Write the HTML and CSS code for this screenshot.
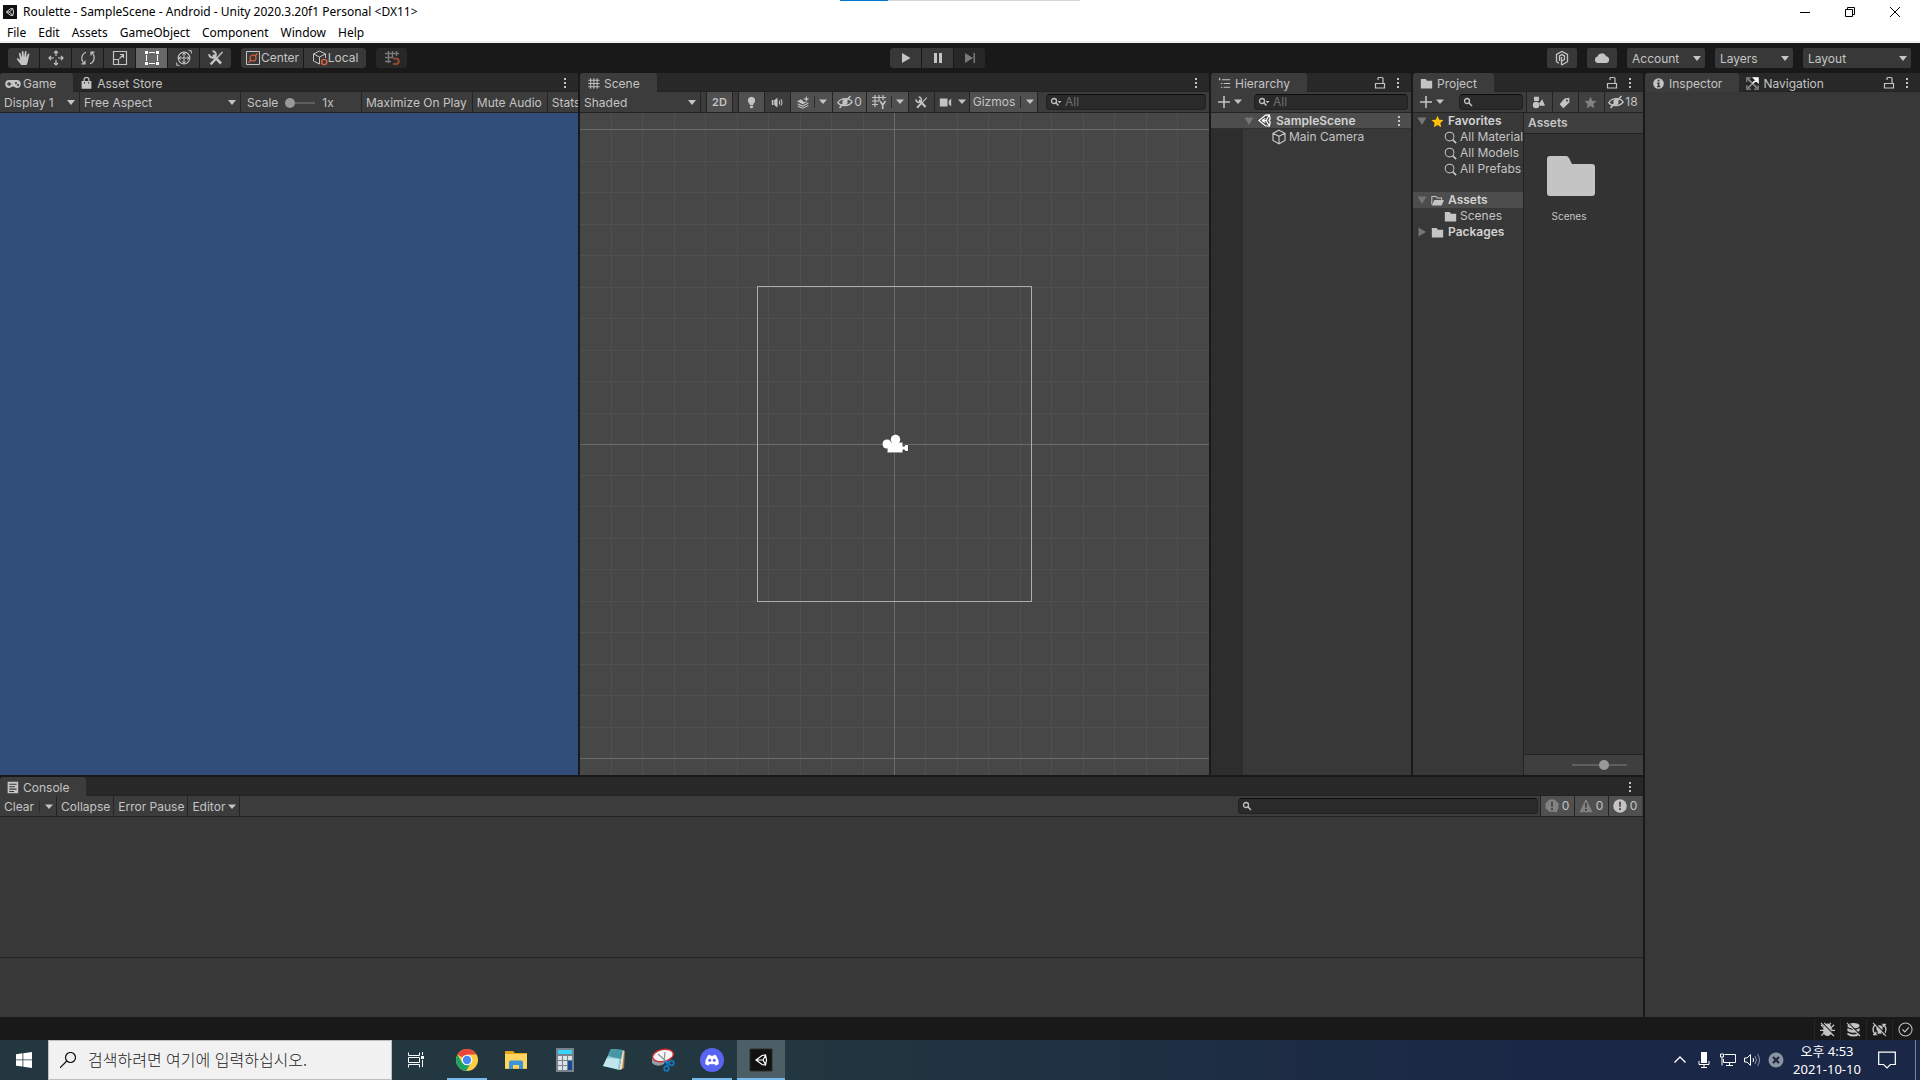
FILE: index.html
```html
<!DOCTYPE html>
<html lang="ko">
<head>
    <meta charset="UTF-8">
    <meta name="viewport" content="width=device-width, initial-scale=1.0">
    <title>Roulette - SampleScene - Android - Unity 2020.3.20f1 Personal</title>
    <link rel="stylesheet" href="styles.css">
</head>
<body>
    <!-- icon sprite -->
    <svg class="sprite" width="0" height="0" aria-hidden="true">
        <symbol id="i-unity" viewBox="0 0 16 16"><path d="M9 1.500 14 1l1 5-1.500 2L15 10l-1 5-5-.5L1.200 8zM5 8h5l3.200-5.500M10 8l3.200 5.500M5 8l4-2.500M5 8l4 2.500" fill="none" stroke="currentColor" stroke-width="1.500"/></symbol>
        <symbol id="i-hand" viewBox="0 0 16 16"><path d="M5.200 15 1 9.500c-.5-1 .6-1.700 1.400-1L4.200 10 2.900 3.800c-.2-1.200 1.300-1.500 1.600-.4L5.900 7.500 5.800 1.800c0-1.200 1.600-1.200 1.700 0L8 7.200 8.900 1.800c.2-1.100 1.700-1 1.600.2L10.200 7.800 11.800 4c.5-1 1.800-.5 1.500.6L12 10.500c-.3 2-.8 3.500-1.500 4.500z" fill="currentColor"/></symbol>
        <symbol id="i-move" viewBox="0 0 16 16"><path d="M8 1v5M8 10v5M1 8h5M10 8h5M6 3l2-2 2 2M6 13l2 2 2-2M3 6 1 8l2 2M13 6l2 2-2 2" fill="none" stroke="currentColor" stroke-width="1.200"/></symbol>
        <symbol id="i-rotate" viewBox="0 0 16 16"><path d="M6 2.200A6.500 6.500 0 0 0 4.500 13.500M1.500 13.800h3.500V10.500M10 13.800A6.500 6.500 0 0 0 11.500 2.500M14.500 2.200H11V5.500" fill="none" stroke="currentColor" stroke-width="1.200"/></symbol>
        <symbol id="i-scale" viewBox="0 0 16 16"><path d="M1.500 1.500h13v13h-13zM1.500 9.500h5v5M7.500 8.500l4-4M8 4.500h3.500V8" fill="none" stroke="currentColor" stroke-width="1.200"/></symbol>
        <symbol id="i-rect" viewBox="0 0 16 16"><path d="M5 2.500h6M5 13.500h6M2.500 5v6M13.500 5v6" stroke="currentColor"/><path d="M1 1h3v3H1zM12 1h3v3h-3zM1 12h3v3H1zM12 12h3v3h-3z" fill="currentColor"/></symbol>
        <symbol id="i-transform" viewBox="0 0 16 16"><circle cx="8" cy="8" r="5.800" fill="none" stroke="currentColor" stroke-width="1.200"/><path d="M8 3v10M3 8h10M6.300 4.700 8 3l1.700 1.700M6.300 11.300 8 13l1.700-1.700M4.700 6.300 3 8l1.700 1.700M11.300 6.300 13 8l-1.700 1.700M12.500.7h2.800v2.800M3.500 15.300H.7v-2.800" fill="none" stroke="currentColor"/></symbol>
        <symbol id="i-tools" viewBox="0 0 16 16"><path d="M3 14.500 14.500 2" stroke="currentColor" stroke-width="1.400"/><path d="M1.800 13.500 7 8l1.600 1.500-5.300 5.600z" fill="currentColor"/><path d="M5 5l8 8.500" stroke="currentColor" stroke-width="2.600"/><path d="M4.500 1.200a3.300 3.300 0 1 1-3.200 3" fill="none" stroke="currentColor" stroke-width="2"/></symbol>
        <symbol id="i-center" viewBox="0 0 16 16"><path d="M1.500 1.500h13v13h-13z" fill="none" stroke="currentColor"/><g fill="none" stroke="#e0643c" stroke-width="1.200"><circle cx="8" cy="8" r="3"/><path d="M3.500 12.500 6 10M10 6l2.500-2.500"/></g></symbol>
        <symbol id="i-cube" viewBox="0 0 16 16"><path d="M8 1.200 14 4.300v7.200L8 14.800 2 11.500V4.300zM2 4.300 8 7.400l6-3.100M8 7.400v7.400" fill="none" stroke="currentColor" stroke-width="1.200"/></symbol>
        <symbol id="i-local" viewBox="0 0 16 16"><path d="M7.500 14 1.500 11V4l6-3 6 3v4M1.500 4l6 3 6-3M7.500 7v7" fill="none" stroke="currentColor"/><circle cx="12.200" cy="12" r="2.600" fill="#383838" stroke="#e0643c" stroke-width="1.400"/></symbol>
        <symbol id="i-snap" viewBox="0 0 16 16"><path d="M4.500 1v12M8.500 1v7M12.500 1v5M1 3.500h14M1 7.500h8M1 11.500h6" stroke="#7a7a7a" stroke-width="1.300"/><path d="M9 8.500h3a2.700 2.700 0 0 1 0 5.500H9" fill="none" stroke="#94472f" stroke-width="2"/></symbol>
        <symbol id="i-play" viewBox="0 0 16 16"><path d="M4 3v10l8.500-5z" fill="currentColor"/></symbol>
        <symbol id="i-pause" viewBox="0 0 16 16"><path d="M4 3h3v10H4zM9 3h3v10H9z" fill="currentColor"/></symbol>
        <symbol id="i-step" viewBox="0 0 16 16"><path d="M3 3v10l8-5zM11.500 3H13v10h-1.500z" fill="currentColor"/></symbol>
        <symbol id="i-collab" viewBox="0 0 16 16"><path d="M5 13.300 2.500 11.700V4.500L8 1.400l5.500 3.100v7.200L8 14.800 7.500 14.500V7M5.500 11V6L8 4.600 10.500 6v3.500L8 11" fill="none" stroke="currentColor" stroke-width="1.300"/></symbol>
        <symbol id="i-cloud" viewBox="0 0 16 16"><path d="M4 13a3.300 3.300 0 0 1-.5-6.500A4.500 4.500 0 0 1 12 6.300 3.400 3.400 0 0 1 12.500 13z" fill="currentColor"/></symbol>
        <symbol id="i-game" viewBox="0 0 16 16"><path fill-rule="evenodd" d="M4.500 4h7a4 4 0 0 1 .5 8c-2 0-2-1.500-4-1.500S6 12 4 12a4 4 0 0 1 .5-8zM3.500 6v1.300H2.200v1.400h1.300V10h1.300V8.700h1.300V7.300H4.800V6zM11 6a1 1 0 1 0 .01 0zM13 8a1 1 0 1 0 .01 0z" fill="currentColor"/></symbol>
        <symbol id="i-bag" viewBox="0 0 16 16"><path d="M2 5h12v9.500H2z" fill="currentColor"/><path d="M5 6V3.500a3 3 0 0 1 6 0V6" fill="none" stroke="currentColor" stroke-width="1.500"/><path d="M5.500 6v2M10.500 6v2" stroke="#383838" stroke-width="1.400"/></symbol>
        <symbol id="i-hash" viewBox="0 0 16 16"><path d="M4.500 1.500v13M8.500 1.500v13M12.500 1.500v13M1.500 4h14M1.500 8h14M1.500 12h14" stroke="currentColor" stroke-width="1.200"/></symbol>
        <symbol id="i-gridy" viewBox="0 0 16 16"><path d="M4 1v12M8 1v6M12 1v5M1 3.500h14M1 7h7M1 10.500h6" stroke="currentColor" stroke-width="1.200"/><path d="M9 7l2.700 4L14.500 7M11.700 11v4" fill="none" stroke="currentColor" stroke-width="1.600"/></symbol>
        <symbol id="i-list" viewBox="0 0 16 16"><path d="M5 3.500h10M7 8h8M7 12.500h8M1 3.500h2M3.500 8h2M3.500 12.500h2M2 1v3" stroke="currentColor" stroke-width="1.300"/></symbol>
        <symbol id="i-folder" viewBox="0 0 16 16"><path d="M1 2.500h6l1.500 2H15v9.500H1z" fill="currentColor"/></symbol>
        <symbol id="i-open" viewBox="0 0 16 16"><path d="M1 13V3h5l1.500 2H13v2" fill="none" stroke="currentColor" stroke-width="1.300"/><path d="M4 7.500h12L13 14H1z" fill="currentColor"/></symbol>
        <symbol id="i-bigfolder" viewBox="0 0 48 40"><path d="M3 0h16q2 0 3 2l3 6h20q3 0 3 3v26q0 3-3 3H3q-3 0-3-3V3q0-3 3-3z" fill="currentColor"/></symbol>
        <symbol id="i-info" viewBox="0 0 16 16"><circle cx="8" cy="8" r="6.500" fill="currentColor"/><path d="M7 3.500h2.200v2H7zM6.200 6.700h3v4.300h1v1.500h-4V11h1V8.200h-1z" fill="#383838"/></symbol>
        <symbol id="i-nav" viewBox="0 0 16 16"><path d="M2 2l12 12M2 14 14 2" stroke="#8a8a8a" stroke-width="2"/><path d="M1 6V1h5M15 10v5h-5M1 10v5h5" fill="none" stroke="#8a8a8a" stroke-width="1.600"/><path d="M9 1h6v6zM8 8l5-5" fill="#fff" stroke="#fff" stroke-width="1.400"/></symbol>
        <symbol id="i-console" viewBox="0 0 16 16"><path d="M2 1h13v14H2z" fill="currentColor"/><path d="M4 4h9M4 7h7M4 10h9M4 13h6" stroke="#383838" stroke-width="1.300"/></symbol>
        <symbol id="i-lock" viewBox="0 0 12 14"><path d="M2 7.500h8.500v4.500h-9V7.500zM4 4V2.500Q4 1.500 5 1.500h3Q9 1.500 9 2.500v5" fill="none" stroke="currentColor" stroke-width="1.200"/></symbol>
        <symbol id="i-more" viewBox="0 0 4 14"><path d="M1 2h2v2H1zM1 6h2v2H1zM1 10h2v2H1z" fill="currentColor"/></symbol>
        <symbol id="i-down" viewBox="0 0 8 6"><path d="M0 .5h8l-4 4.500z" fill="currentColor"/></symbol>
        <symbol id="i-fold" viewBox="0 0 10 10"><path d="M.5 1.500h9L5 9z" fill="currentColor"/></symbol>
        <symbol id="i-bulb" viewBox="0 0 16 16"><path d="M8 1a4.500 4.500 0 0 1 4.200 6c-.6 1.700-2 2.200-2.200 4H6c-.2-1.800-1.600-2.300-2.200-4A4.500 4.500 0 0 1 8 1zM6 12h4v1.500L9 15H7l-1-1.500z" fill="currentColor"/></symbol>
        <symbol id="i-audio" viewBox="0 0 16 16"><path d="M1 5h2v6H1zM4 5l4-3v12l-4-3z" fill="currentColor"/><path d="M10 5.500q1.500 2.500 0 5M12 4q3 4 0 8" fill="none" stroke="currentColor" stroke-width="1.300"/></symbol>
        <symbol id="i-fx" viewBox="0 0 16 16"><path d="M0 6.500 5 4l3.500 3.500 4.500-.5L7 10zM1 9l6 2.600L14 8v1.600L7 13.200 1 10.500zM1 11.800l6 2.600 7-3.400v1.400L7 15.800l-6-2.600z" fill="currentColor"/><path d="M11.500 0l1 2.800 3 .9-3 1-1 2.800-1-2.800-3-1 3-.9z" fill="currentColor"/></symbol>
        <symbol id="i-eye" viewBox="0 0 16 16"><path d="M.8 8.500C4 3.700 12 3.200 15.200 8 12 12.500 4 12.800.8 8.500z" fill="none" stroke="currentColor" stroke-width="1.300"/><ellipse cx="8" cy="8" rx="2.600" ry="3" fill="currentColor"/><path d="M2.500 14 13.500 2" stroke="currentColor" stroke-width="1.500"/></symbol>
        <symbol id="i-video" viewBox="0 0 16 16"><path d="M1 3h9.500v10H1zM12 6l3-3v10l-3-3z" fill="currentColor"/></symbol>
        <symbol id="i-search" viewBox="0 0 10 10"><circle cx="4" cy="4" r="2.500" fill="none" stroke="currentColor" stroke-width="1.300"/><path d="M5.800 5.800 9 9" stroke="currentColor" stroke-width="1.500"/></symbol>
        <symbol id="i-searchdown" viewBox="0 0 13 10"><circle cx="4" cy="4" r="2.500" fill="none" stroke="currentColor" stroke-width="1.300"/><path d="M5.800 5.800 8.500 8.500" stroke="currentColor" stroke-width="1.500"/><path d="M7.500 4h4l-2 2.200z" fill="currentColor"/></symbol>
        <symbol id="i-find" viewBox="0 0 14 14"><circle cx="6" cy="6" r="4.700" fill="none" stroke="currentColor" stroke-width="1.100"/><path d="M9.500 9.500 13 13" stroke="currentColor" stroke-width="1.800"/></symbol>
        <symbol id="i-plus" viewBox="0 0 12 12"><path d="M6 0v12M0 6h12" stroke="currentColor" stroke-width="1.600"/></symbol>
        <symbol id="i-star" viewBox="0 0 14 14"><path d="M7 .8 8.900 5l4.600.5-3.400 3.100.9 4.600-4-2.300-4 2.300.9-4.600L.5 5.500 5.100 5z" fill="currentColor"/></symbol>
        <symbol id="i-shapes" viewBox="0 0 16 16"><path d="M2.500 1h6v5h-6z" fill="currentColor"/><circle cx="5" cy="11" r="4" fill="currentColor"/><path d="M12.500 4 16 12h-6.500L9 9z" fill="currentColor"/></symbol>
        <symbol id="i-tag" viewBox="0 0 16 16"><path fill-rule="evenodd" d="M8 3l6-1v6L6.500 15 2 10zM11 4.200a1.300 1.300 0 1 0 .01 0z" fill="currentColor"/></symbol>
        <symbol id="i-err" viewBox="0 0 16 16"><path d="M5 .5h6L15.500 5v5.500l-1.500 2v2.500l-4-.3H5L.5 10.500V5z" fill="currentColor"/><path d="M7 3h2l-.3 6H7.300zM7 10.500h2v2H7z" fill="#3a3a3a"/></symbol>
        <symbol id="i-warn" viewBox="0 0 16 16"><path d="M7.300 1h1.400L15.500 15H.5z" fill="currentColor"/><path d="M7 4.500h2l-.3 5.500H7.300zM7 11.500h2v2H7z" fill="#3a3a3a"/></symbol>
        <symbol id="i-note" viewBox="0 0 16 16"><circle cx="8" cy="8" r="7.700" fill="currentColor"/><path d="M7 3h2l-.3 6H7.300zM7 10.500h2v2H7z" fill="#3a3a3a"/></symbol>
        <symbol id="i-bug" viewBox="0 0 16 16"><path d="M4.500 5a3.500 3.500 0 0 1 7 0l1 1v5q-1 4-4.500 4t-4.500-4V6z" fill="currentColor"/><path d="M1 3l3 3M15 3l-3 3M0 9h16M1.500 14.500 5 11M14.500 14.500 11 11M4.500 1l1.500 2M11.500 1 10 3" stroke="currentColor" stroke-width="1.400"/><path d="M2.500 1 16 14.500" stroke="#191919" stroke-width="1.300"/><path d="M1 1l14 14" stroke="currentColor" stroke-width="1.200"/></symbol>
        <symbol id="i-stack" viewBox="0 0 16 16"><ellipse cx="8" cy="4" rx="6.500" ry="3" fill="currentColor"/><path d="M1.500 6.500q6.500 4 13 0v3q-6.500 4-13 0zM1.500 11.500q6.500 3.500 13 0v2q-6.500 4-13 0z" fill="currentColor"/><path d="M2.500 1 16 14.500" stroke="#191919" stroke-width="1.300"/><path d="M1 1l14 14" stroke="currentColor" stroke-width="1.200"/></symbol>
        <symbol id="i-bake" viewBox="0 0 16 16"><path d="M4 2.500A6.700 6.700 0 0 0 4 13.500H1M12 13.500A6.700 6.700 0 0 0 12 2.500h3M4 13.500V10.500M12 2.500v3" fill="none" stroke="currentColor" stroke-width="1.400"/><path d="M8 3.500a3.300 3.300 0 0 1 2 6v3H6v-3a3.300 3.300 0 0 1 2-6z" fill="currentColor"/><path d="M2.500 1 16 14.500" stroke="#191919" stroke-width="1.300"/><path d="M1 1l14 14" stroke="currentColor" stroke-width="1.200"/></symbol>
        <symbol id="i-check" viewBox="0 0 16 16"><circle cx="8" cy="8" r="7" fill="none" stroke="currentColor" stroke-width="1.100"/><path d="M4.800 8l2.500 2.500L11.500 5.800" fill="none" stroke="currentColor" stroke-width="1.300"/></symbol>
    </svg>

    <header class="titlebar">
        <div class="share-strip"></div>
        <svg class="app-icon" viewBox="0 0 14 14"><path d="M0 0h14v14H0z" fill="#111"/><path d="M7.500 3.700 9.800 3.500 10.500 7l-.7 3.500-2.300-.2L3.300 7zM3.500 7h3l3-3M6.500 7l3 3.300" fill="none" stroke="#ddd"/></svg>
        <h1>Roulette - SampleScene - Android - Unity 2020.3.20f1 Personal &lt;DX11&gt;</h1>
        <div class="window-buttons">
            <button type="button" aria-label="Minimize"><svg viewBox="0 0 10 10"><path d="M0 5.500h10" stroke="#000"/></svg></button>
            <button type="button" aria-label="Restore"><svg viewBox="0 0 10 10"><path d="M.5 2.500h7v7h-7zM2.500 2.500v-2h7v7h-2" fill="none" stroke="#000"/></svg></button>
            <button type="button" aria-label="Close"><svg viewBox="0 0 10 10"><path d="M0 0l10 10M10 0 0 10" stroke="#000"/></svg></button>
        </div>
    </header>

    <nav class="menubar">
        <button type="button">File</button>
        <button type="button">Edit</button>
        <button type="button">Assets</button>
        <button type="button">GameObject</button>
        <button type="button">Component</button>
        <button type="button">Window</button>
        <button type="button">Help</button>
    </nav>

    <div class="main-toolbar">
        <div class="toolbar-left">
            <div class="btn-group">
                <button type="button" aria-label="Hand"><svg class="icon"><use href="#i-hand"/></svg></button>
                <button type="button" aria-label="Move"><svg class="icon"><use href="#i-move"/></svg></button>
                <button type="button" aria-label="Rotate"><svg class="icon"><use href="#i-rotate"/></svg></button>
                <button type="button" aria-label="Scale"><svg class="icon"><use href="#i-scale"/></svg></button>
                <button type="button" aria-label="Rect" class="selected"><svg class="icon"><use href="#i-rect"/></svg></button>
                <button type="button" aria-label="Transform"><svg class="icon"><use href="#i-transform"/></svg></button>
                <button type="button" aria-label="Custom tools"><svg class="icon"><use href="#i-tools"/></svg></button>
            </div>
            <div class="btn-group pivot">
                <button type="button"><svg class="icon"><use href="#i-center"/></svg>Center</button>
                <button type="button"><svg class="icon"><use href="#i-local"/></svg>Local</button>
            </div>
            <div class="btn-group">
                <button type="button" aria-label="Grid snapping" class="off"><svg class="icon"><use href="#i-snap"/></svg></button>
            </div>
        </div>
        <div class="btn-group play-controls">
            <button type="button" aria-label="Play"><svg class="icon"><use href="#i-play"/></svg></button>
            <button type="button" aria-label="Pause"><svg class="icon"><use href="#i-pause"/></svg></button>
            <button type="button" aria-label="Step" class="off"><svg class="icon"><use href="#i-step"/></svg></button>
        </div>
        <div class="toolbar-right">
            <button type="button" aria-label="Collaborate"><svg class="icon"><use href="#i-collab"/></svg></button>
            <button type="button" aria-label="Services"><svg class="icon"><use href="#i-cloud"/></svg></button>
            <select aria-label="Account"><option>Account</option></select>
            <select aria-label="Layers"><option>Layers</option></select>
            <select aria-label="Layout" class="layout-select"><option>Layout</option></select>
        </div>
    </div>

    <main class="workspace">
        <div class="docks">
            <div class="docks-top">
                <section class="panel game">
                    <div class="tabs">
                        <button type="button" class="tab active"><svg class="icon"><use href="#i-game"/></svg>Game</button>
                        <button type="button" class="tab"><svg class="icon small"><use href="#i-bag"/></svg>Asset Store</button>
                        <button type="button" class="more" aria-label="Game options"><svg class="dots"><use href="#i-more"/></svg></button>
                    </div>
                    <div class="bar">
                        <select class="display-select" aria-label="Display"><option>Display 1</option></select>
                        <select class="aspect-select" aria-label="Aspect"><option>Free Aspect</option></select>
                        <label class="scale">Scale <input type="range" min="1" max="5" value="1"> <span>1x</span></label>
                        <button type="button">Maximize On Play</button>
                        <button type="button">Mute Audio</button>
                        <button type="button">Stats</button>
                    </div>
                    <div class="game-view"></div>
                </section>

                <section class="panel scene">
                    <div class="tabs">
                        <button type="button" class="tab active"><svg class="icon small"><use href="#i-hash"/></svg>Scene</button>
                        <button type="button" class="more" aria-label="Scene options"><svg class="dots"><use href="#i-more"/></svg></button>
                    </div>
                    <div class="bar">
                        <select class="shading-select" aria-label="Shading"><option>Shaded</option></select>
                        <span class="spacer"></span>
                        <button type="button" class="tool on mode">2D</button>
                        <span class="spacer"></span>
                        <button type="button" class="tool on" aria-label="Lighting"><svg class="icon small"><use href="#i-bulb"/></svg></button>
                        <button type="button" class="tool" aria-label="Audio"><svg class="icon small"><use href="#i-audio"/></svg></button>
                        <button type="button" class="tool wide on" aria-label="Effects"><svg class="icon small"><use href="#i-fx"/></svg><i></i><svg class="down"><use href="#i-down"/></svg></button>
                        <button type="button" class="tool count on"><svg class="icon"><use href="#i-eye"/></svg>0</button>
                        <button type="button" class="tool wide on" aria-label="Grid"><svg class="icon"><use href="#i-gridy"/></svg><i></i><svg class="down"><use href="#i-down"/></svg></button>
                        <button type="button" class="tool" aria-label="Component tools"><svg class="icon small"><use href="#i-tools"/></svg></button>
                        <button type="button" class="tool camera" aria-label="Camera"><svg class="icon small"><use href="#i-video"/></svg><svg class="down"><use href="#i-down"/></svg></button>
                        <button type="button" class="tool gizmos on">Gizmos<i></i><svg class="down"><use href="#i-down"/></svg></button>
                        <label class="search"><svg class="glass menu"><use href="#i-searchdown"/></svg><input type="text" placeholder="All" aria-label="Search scene"></label>
                    </div>
                    <div class="scene-view">
                        <svg class="scene-grid" width="100%" height="100%">
                            <!-- origin sits in the middle of the view -->
                            <svg x="50%" y="50%" overflow="visible" fill="none" shape-rendering="crispEdges">
                                <path stroke="#505050" d="M-283-600v1200M-252-600v1200M-220-600v1200M-189-600v1200M-157-600v1200M-126-600v1200M-94-600v1200M-63-600v1200M-31-600v1200M31-600v1200M63-600v1200M94-600v1200M126-600v1200M157-600v1200M189-600v1200M220-600v1200M252-600v1200M283-600v1200"/>
                                <path stroke="#505050" d="M-900-283h1800M-900-252h1800M-900-220h1800M-900-189h1800M-900-157h1800M-900-126h1800M-900-94h1800M-900-63h1800M-900-31h1800M-900 31h1800M-900 62h1800M-900 94h1800M-900 125h1800M-900 157h1800M-900 188h1800M-900 220h1800M-900 251h1800M-900 283h1800"/>
                                <path stroke="#6b6b6b" d="M0-600v1200M-900 0h1800M-900-315h1800M-900 314h1800M315-600v1200"/>
                            </svg>
                        </svg>
                        <div class="camera-frame">
                            <svg class="camera-gizmo" viewBox="0 0 28 20">
                                <g id="cam" fill="#fff"><circle cx="6" cy="10" r="4.500"/><circle cx="14.500" cy="5.500" r="4.700"/><path d="M6.500 8.500h15v3.500l1.500 1 1.500-2H27v6h-2.500l-1.500-2-1.500 1v2.500h-15z"/></g>
                                <use href="#cam" stroke="#333"/>
                                <use href="#cam"/>
                            </svg>
                        </div>
                    </div>
                </section>

                <section class="panel hierarchy">
                    <div class="tabs">
                        <button type="button" class="tab active"><svg class="icon small"><use href="#i-list"/></svg>Hierarchy</button>
                        <button type="button" class="more" aria-label="Lock"><svg class="lock"><use href="#i-lock"/></svg></button>
                        <button type="button" class="more" aria-label="Hierarchy options"><svg class="dots"><use href="#i-more"/></svg></button>
                    </div>
                    <div class="bar">
                        <button type="button" class="add" aria-label="Create"><svg class="plus"><use href="#i-plus"/></svg><svg class="down"><use href="#i-down"/></svg></button>
                        <label class="search"><svg class="glass menu"><use href="#i-searchdown"/></svg><input type="text" placeholder="All" aria-label="Search hierarchy"></label>
                    </div>
                    <div class="hierarchy-body">
                        <div class="scene-row">
                            <svg class="fold"><use href="#i-fold"/></svg>
                            <svg class="icon small bright"><use href="#i-unity"/></svg>
                            <strong>SampleScene</strong>
                            <button type="button" class="more" aria-label="Scene menu"><svg class="dots"><use href="#i-more"/></svg></button>
                        </div>
                        <div class="hierarchy-list">
                            <div class="gutter"></div>
                            <div class="object-row"><svg class="icon"><use href="#i-cube"/></svg>Main Camera</div>
                        </div>
                    </div>
                </section>

                <section class="panel project">
                    <div class="tabs">
                        <button type="button" class="tab active"><svg class="icon small"><use href="#i-folder"/></svg>Project</button>
                        <button type="button" class="more" aria-label="Lock"><svg class="lock"><use href="#i-lock"/></svg></button>
                        <button type="button" class="more" aria-label="Project options"><svg class="dots"><use href="#i-more"/></svg></button>
                    </div>
                    <div class="bar">
                        <button type="button" class="add" aria-label="Create"><svg class="plus"><use href="#i-plus"/></svg><svg class="down"><use href="#i-down"/></svg></button>
                        <label class="search"><svg class="glass"><use href="#i-search"/></svg><input type="text" aria-label="Search project"></label>
                        <button type="button" class="tool lit" aria-label="Search by type"><svg class="icon small"><use href="#i-shapes"/></svg></button>
                        <button type="button" class="tool lit" aria-label="Search by label"><svg class="icon small"><use href="#i-tag"/></svg></button>
                        <button type="button" class="tool lit dim" aria-label="Save search"><svg class="icon small"><use href="#i-star"/></svg></button>
                        <button type="button" class="tool lit hidden-count"><svg class="icon"><use href="#i-eye"/></svg>18</button>
                    </div>
                    <div class="project-body">
                        <ul class="tree">
                            <li class="root"><svg class="fold"><use href="#i-fold"/></svg><svg class="icon small gold"><use href="#i-star"/></svg>Favorites</li>
                            <li class="child"><svg class="icon small"><use href="#i-find"/></svg>All Materials</li>
                            <li class="child"><svg class="icon small"><use href="#i-find"/></svg>All Models</li>
                            <li class="child favorites-end"><svg class="icon small"><use href="#i-find"/></svg>All Prefabs</li>
                            <li class="root picked"><svg class="fold"><use href="#i-fold"/></svg><svg class="icon small"><use href="#i-open"/></svg>Assets</li>
                            <li class="child"><svg class="icon small"><use href="#i-folder"/></svg>Scenes</li>
                            <li class="root"><svg class="fold closed"><use href="#i-fold"/></svg><svg class="icon small"><use href="#i-folder"/></svg>Packages</li>
                        </ul>
                        <div class="browser">
                            <div class="crumbs">Assets</div>
                            <div class="assets">
                                <figure><svg><use href="#i-bigfolder"/></svg><figcaption>Scenes</figcaption></figure>
                            </div>
                            <div class="browser-foot"><input type="range" min="0" max="100" value="60" aria-label="Icon size"></div>
                        </div>
                    </div>
                </section>
            </div>

            <section class="panel console">
                <div class="tabs">
                    <button type="button" class="tab active"><svg class="icon small"><use href="#i-console"/></svg>Console</button>
                    <button type="button" class="more" aria-label="Console options"><svg class="dots"><use href="#i-more"/></svg></button>
                </div>
                <div class="bar">
                    <button type="button" class="clear">Clear<i></i><svg class="down"><use href="#i-down"/></svg></button>
                    <button type="button">Collapse</button>
                    <button type="button">Error Pause</button>
                    <button type="button" class="editor">Editor<svg class="down"><use href="#i-down"/></svg></button>
                    <label class="search"><svg class="glass"><use href="#i-search"/></svg><input type="text" aria-label="Search console"></label>
                    <button type="button" class="badge dim"><svg class="icon"><use href="#i-err"/></svg><span>0</span></button>
                    <button type="button" class="badge dim"><svg class="icon"><use href="#i-warn"/></svg><span>0</span></button>
                    <button type="button" class="badge"><svg class="icon"><use href="#i-note"/></svg><span>0</span></button>
                </div>
                <div class="log"></div>
                <div class="log-detail"></div>
            </section>
        </div>

        <section class="panel inspector">
            <div class="tabs">
                <button type="button" class="tab active"><svg class="icon small"><use href="#i-info"/></svg>Inspector</button>
                <button type="button" class="tab"><svg class="icon small"><use href="#i-nav"/></svg>Navigation</button>
                <button type="button" class="more" aria-label="Lock"><svg class="lock"><use href="#i-lock"/></svg></button>
                <button type="button" class="more" aria-label="Inspector options"><svg class="dots"><use href="#i-more"/></svg></button>
            </div>
        </section>
    </main>

    <div class="statusbar">
        <button type="button" aria-label="Debugger"><svg class="icon"><use href="#i-bug"/></svg></button>
        <button type="button" aria-label="Cache server"><svg class="icon"><use href="#i-stack"/></svg></button>
        <button type="button" aria-label="Auto lighting"><svg class="icon"><use href="#i-bake"/></svg></button>
        <button type="button" aria-label="Background tasks"><svg class="icon"><use href="#i-check"/></svg></button>
    </div>

    <footer class="taskbar">
        <button type="button" class="start" aria-label="시작"><svg viewBox="0 0 16 16"><path d="M0 2.200 6.500 1.300v6.200H0zM7.300 1.200 16 0v7.500H7.300zM0 8.300h6.500v6.300L0 13.700zM7.300 8.300H16V16l-8.700-1.200z" fill="#fff"/></svg></button>
        <label class="os-search">
            <svg viewBox="0 0 16 16"><circle cx="10.500" cy="5.500" r="5" fill="none" stroke="#111" stroke-width="1.200"/><path d="M6.800 9 0 15.800" stroke="#111" stroke-width="1.200"/></svg>
            <input type="text" placeholder="검색하려면 여기에 입력하십시오." aria-label="검색">
        </label>
        <button type="button" class="task" aria-label="작업 보기"><svg viewBox="0 0 24 24"><path d="M4.500 4.500v3h11v-3M4.500 19.500v-3h11v3M4.500 9.500h11v5h-11zM18.500 4v3M18.500 12v7" fill="none" stroke="#fff"/><path d="M17 8h3v3h-3z" fill="#fff"/></svg></button>
        <button type="button" class="task running" aria-label="Chrome"><svg viewBox="0 0 24 24"><circle cx="12" cy="12" r="11" fill="#ffcd43"/><path d="M12 12 2.500 6.500A11 11 0 0 1 21.500 6.500H12z" fill="#e8453c"/><path d="M12 12 7.200 14.700 2.500 6.500a11 11 0 0 0 8.700 16.500l4.700-8.300z" fill="#1da261"/><circle cx="12" cy="12" r="5.300" fill="#fff"/><circle cx="12" cy="12" r="4.200" fill="#4587f3"/></svg></button>
        <button type="button" class="task" aria-label="파일 탐색기"><svg viewBox="0 0 24 24"><path d="M1 3h8l2 2h12v16H1z" fill="#e7a514"/><path d="M1 6h22v14.500H1z" fill="#ffd55f"/><path d="M5 21v-6.500q0-2 2-2h10q2 0 2 2V21h-4v-4H9v4z" fill="#3b94d9"/></svg></button>
        <button type="button" class="task" aria-label="계산기"><svg viewBox="0 0 24 24"><path d="M3 0h18v24H3z" fill="#78828b"/><path d="M5 2h14v4H5z" fill="#37d4f7"/><path d="M5 8h4v4H5zM10 8h4v4h-4zM15 8h4v4h-4zM5 13h4v4H5zM10 13h4v4h-4zM5 18h4v4H5zM10 18h4v4h-4z" fill="#dce3e8"/><path d="M15 13h4v9h-4z" fill="#154a96"/></svg></button>
        <button type="button" class="task" aria-label="메모장"><svg viewBox="0 0 24 24"><path d="M21 2l2 1-1 17-4 2z" fill="#a8833f"/><path d="M9 1l12 1-4 20L1 18z" fill="#8fcbd6"/><path d="M9 1l12 1-2 9L6 8z" fill="#4796a4"/><path d="M1 18l4-8 12 1-1 10z" fill="#c0e7eb"/><path d="M17 22 21 2l1 2-2 17z" fill="#e9e3d3"/></svg></button>
        <button type="button" class="task" aria-label="캡처 도구"><svg viewBox="0 0 24 24"><path d="M1 10v5q5 5 12 1l1-6z" fill="#949ca3"/><ellipse cx="12" cy="7.500" rx="10.500" ry="6" fill="#f6f6f6" stroke="#d42b35" stroke-width="1.400" transform="rotate(-12 12 7.500)"/><path d="M7 6l9 8M14 4l-1 10" stroke="#89939b" stroke-width="1.200"/><g fill="none" stroke="#1677bd" stroke-width="1.800"><circle cx="20.500" cy="15" r="2.300"/><circle cx="15.500" cy="20.500" r="2.300"/><path d="M13 14l5 2M17 13l-1 5"/></g></svg></button>
        <button type="button" class="task running" aria-label="Discord"><svg viewBox="0 0 24 24"><circle cx="12" cy="12" r="12" fill="#5865f2"/><path d="M8 7.200 10 6.700l.5 1h3l.5-1 2 .5q3 4.300 2.700 8.800-1.500 1.200-3.200 1.500l-1-1.500q-2.500.7-5 0l-1 1.500q-1.700-.3-3.200-1.500Q5 11.500 8 7.200z" fill="#fff"/><circle cx="9.700" cy="12.300" r="1.500" fill="#5865f2"/><circle cx="14.300" cy="12.300" r="1.500" fill="#5865f2"/></svg></button>
        <button type="button" class="task running current" aria-label="Unity"><svg viewBox="0 0 24 24"><path d="M1 1h22v22H1z" fill="#111" stroke="#2c2c2c"/><path d="M13 7.500 16.500 7l1 5-1 5-3.500-.5L7 12zM8 12h6l2.500-4.500M14 12l2.500 4.500" fill="none" stroke="#fff" stroke-width="1.200"/></svg></button>

        <div class="tray">
            <svg class="tray-icon" viewBox="0 0 16 16"><path d="M2.500 10.500 8 5l5.500 5.500" fill="none" stroke="#fff" stroke-width="1.400"/></svg>
            <svg class="tray-icon" viewBox="0 0 16 16"><path d="M5 0h6v11H5z" fill="#fff"/><path d="M3 9v3.500h10V9M8 12.500v3M5 15.500h6" fill="none" stroke="#fff"/></svg>
            <svg class="tray-icon" viewBox="0 0 16 16"><path d="M4.500 2.500h11v8h-12V7M9.500 10.500v3M6 13.500h7M.5 2h3v3h-3zM2 5v8.500" fill="none" stroke="#fff"/></svg>
            <svg class="tray-icon" viewBox="0 0 16 16"><path d="M.5 6v4H3l3.500 3.500v-11L3 6z" fill="none" stroke="#fff"/><path d="M9 6q1.200 2 0 4" fill="none" stroke="#fff"/><path d="M11 4q3 4 0 8M13.500 2q4 6 0 12" fill="none" stroke="#8b94a6"/></svg>
            <svg class="tray-icon" viewBox="0 0 16 16"><circle cx="8" cy="8" r="7.500" fill="#8c93a1"/><path d="M5 5l6 6M11 5l-6 6" stroke="#1a2746" stroke-width="2.200"/></svg>
            <div class="clock"><time>오후 4:53</time><time>2021-10-10</time></div>
            <svg class="notice" viewBox="0 0 16 16"><path d="M.6 1h14.800v11H11l-3 3-3-3H.6z" fill="none" stroke="#fff" stroke-width="1.100"/></svg>
            <div class="show-desktop"></div>
        </div>
    </footer>
</body>
</html>
```

FILE: styles.css
```css
* {
    box-sizing: border-box;
}

body {
    margin: 0;
    height: 100vh;
    display: flex;
    flex-direction: column;
    overflow: hidden;
    background-color: #191919;
    color: #c4c4c4;
    font-family: Inter, "Liberation Sans", sans-serif;
    font-size: 12px;
    line-height: 16px;
}

button,
select,
input {
    font: inherit;
    color: inherit;
    margin: 0;
    padding: 0;
    border: none;
    border-radius: 0;
    background: none;
}

button {
    display: flex;
    align-items: center;
    justify-content: center;
    white-space: nowrap;
}

svg {
    display: block;
    flex-shrink: 0;
}

.sprite {
    position: absolute;
}

.icon {
    width: 16px;
    height: 16px;
}

.icon.small {
    width: 13px;
    height: 13px;
}

.down {
    width: 8px;
    height: 6px;
}

.dots {
    width: 4px;
    height: 14px;
}

.lock {
    width: 12px;
    height: 14px;
}

select {
    appearance: none;
    padding: 0 20px 0 4px;
    background: url("data:image/svg+xml,%3Csvg xmlns='http://www.w3.org/2000/svg' width='8' height='5'%3E%3Cpath d='M0 0h8L4 5z' fill='%23c4c4c4'/%3E%3C/svg%3E") no-repeat right 4px center;
}

/* window title and menu */
.titlebar,
.menubar {
    display: flex;
    align-items: center;
    padding-top: 2px;
    background: #ffffff;
    color: #000000;
    font-family: "Noto Sans", "Noto Sans CJK KR", sans-serif;
}

.titlebar {
    position: relative;
    height: 22px;
    flex-shrink: 0;
    padding-left: 3px;
    padding-right: 3px;
    gap: 6px;
}

.share-strip {
    position: absolute;
    top: 0;
    left: 50%;
    width: 240px;
    height: 1px;
    margin-left: -120px;
    background: linear-gradient(to right, #0078d7 48px, #d5d5d5 48px);
}

.app-icon {
    width: 14px;
    height: 14px;
}

.titlebar h1 {
    margin: 0;
    font-size: 12px;
    font-weight: normal;
}

.window-buttons {
    display: flex;
    margin-left: auto;
}

.window-buttons button {
    width: 45px;
    height: 20px;
}

.window-buttons svg {
    width: 10px;
    height: 10px;
}

.menubar {
    height: 21px;
    flex-shrink: 0;
    padding-left: 1px;
    border-bottom: 2px solid #f0f0f0;
}

.menubar button {
    padding: 0 6px;
}

/* main toolbar */
.main-toolbar {
    display: grid;
    grid-template-columns: 1fr auto 1fr;
    align-items: center;
    height: 30px;
    flex-shrink: 0;
    padding: 0 9px 0 8px;
}

.toolbar-left,
.toolbar-right,
.btn-group {
    display: flex;
}

.toolbar-left,
.toolbar-right {
    gap: 10px;
}

.toolbar-right {
    justify-content: flex-end;
}

.btn-group {
    gap: 1px;
    border-radius: 3px;
    overflow: hidden;
}

.main-toolbar button,
.main-toolbar select {
    height: 20px;
    background-color: #383838;
}

.main-toolbar select {
    padding-top: 1px;
}

.main-toolbar button {
    width: 31px;
}

.main-toolbar .pivot button {
    width: 62px;
}

.main-toolbar button.selected {
    background-color: #676767;
    color: #ffffff;
}

.main-toolbar button.off {
    background-color: #272727;
    color: #7a7a7a;
}

.play-controls {
    margin-right: 44px;
}

.main-toolbar .toolbar-right button {
    width: 30px;
}

.toolbar-right button,
.toolbar-right select {
    border-radius: 2px;
}

.toolbar-right select {
    width: 78px;
    padding-left: 5px;
}

.toolbar-right .layout-select {
    width: 108px;
}

/* docked panels */
.workspace {
    flex: 1;
    min-height: 0;
    display: grid;
    grid-template-columns: 1fr 275px;
    gap: 2px;
}

.docks {
    display: flex;
    flex-direction: column;
    gap: 2px;
    min-width: 0;
}

.docks-top {
    flex: 1;
    min-height: 0;
    display: grid;
    grid-template-columns: 578fr 629fr 200fr 230fr;
    gap: 2px;
}

.panel {
    display: flex;
    flex-direction: column;
    min-width: 0;
    background-color: #383838;
    border-radius: 3px 3px 0 0;
    overflow: hidden;
}

.tabs {
    display: flex;
    height: 19px;
    flex-shrink: 0;
    background-color: #282828;
    box-shadow: inset 0 -1px #232323;
}

.tab {
    gap: 4px;
    padding: 2px 10px 0 7px;
}

.tab.active {
    padding-right: 17px;
    background-color: #3c3c3c;
    border-radius: 3px 3px 0 0;
}

.game .tab.active {
    padding-left: 5px;
    gap: 2px;
}

.console .tab.active {
    padding-left: 6px;
}

.more {
    width: 18px;
}

.tab + .more {
    margin-left: auto;
}

.tabs .more:last-child {
    margin-right: 4px;
}

.bar {
    display: flex;
    align-items: stretch;
    height: 21px;
    flex-shrink: 0;
    background-color: #3c3c3c;
    border-bottom: 1px solid #232323;
    overflow: hidden;
}

.bar > button,
.bar > select,
.bar > .scale {
    flex-shrink: 0;
    padding: 2px 5px 0 4px;
    border-right: 1px solid #232323;
}

.bar i {
    width: 1px;
    height: 12px;
    background-color: #2c2c2c;
}

.display-select {
    width: 80px;
}

.aspect-select {
    width: 161px;
}

.shading-select {
    width: 121px;
}

.bar > .scale {
    display: flex;
    align-items: center;
    gap: 7px;
    width: 121px;
    padding-left: 6px;
}

input[type="range"] {
    appearance: none;
    width: 30px;
    height: 10px;
}

input[type="range"]::-webkit-slider-runnable-track {
    height: 2px;
    background-color: #5e5e5e;
}

input[type="range"]::-webkit-slider-thumb {
    appearance: none;
    width: 10px;
    height: 10px;
    margin-top: -4px;
    border-radius: 50%;
    background-color: #999999;
}

.spacer {
    width: 6px;
    border-right: 1px solid #232323;
}

.bar > .tool {
    width: 26px;
    padding: 0;
}

.bar > .tool.on {
    background-color: #505050;
}

.tool.mode {
    font-size: 11px;
    font-weight: 600;
}

.bar > .tool.wide {
    width: 42px;
    gap: 4px;
}

.bar > .tool.count {
    width: 34px;
    gap: 1px;
}

.bar > .tool.camera {
    width: 35px;
    gap: 6px;
}

.bar > .tool.gizmos {
    width: 68px;
    gap: 5px;
}

.bar > .tool.lit {
    padding-right: 2px;
    background-color: #404040;
    border-right: none;
    border-left: 1px solid #232323;
}

.bar > .tool.hidden-count {
    width: 39px;
    gap: 1px;
}

.bar .dim {
    color: #818181;
}

.search {
    flex: 1;
    min-width: 0;
    display: flex;
    align-items: center;
    align-self: center;
    gap: 2px;
    height: 16px;
    margin: 0 3px 0 8px;
    padding: 0 3px;
    background-color: #2a2a2a;
    border: 1px solid #212121;
    border-top-color: #0d0d0d;
    border-radius: 4px;
}

.search input {
    flex: 1;
    min-width: 0;
    width: 0;
    outline: none;
}

.search input::placeholder {
    color: #707070;
}

.glass {
    width: 10px;
    height: 10px;
}

.glass.menu {
    width: 13px;
}

.bar > .add {
    gap: 4px;
    padding: 0 4px 0 7px;
    border: none;
}

.plus {
    width: 12px;
    height: 12px;
}

.project .add + .search {
    margin-left: 11px;
}

.game-view {
    flex: 1;
    background-color: #314d79;
}

/* scene view */
.scene-view {
    position: relative;
    flex: 1;
    display: flex;
    align-items: center;
    justify-content: center;
    background-color: #474747;
    overflow: hidden;
}

.scene-grid {
    position: absolute;
    inset: 0;
}

.camera-frame {
    position: relative;
    display: flex;
    align-items: center;
    justify-content: center;
    width: 275px;
    height: 316px;
    border: 1px solid #acacac;
}

.camera-gizmo {
    width: 28px;
    height: 20px;
}

/* hierarchy */
.hierarchy-body {
    flex: 1;
    display: flex;
    flex-direction: column;
}

.scene-row {
    display: flex;
    align-items: center;
    gap: 4px;
    height: 16px;
    padding-left: 33px;
    background-color: #4d4d4d;
    border-bottom: 1px solid #303030;
}

.scene-row strong {
    flex: 1;
    padding-left: 1px;
    font-weight: 600;
    color: #d2d2d2;
}

.scene-row .more {
    width: 24px;
}

.bright {
    color: #ffffff;
}

.fold {
    width: 10px;
    height: 10px;
    color: #757575;
}

.fold.closed {
    transform: rotate(-90deg);
}

.hierarchy-list {
    flex: 1;
    display: flex;
}

.gutter {
    width: 32px;
    background-color: #2d2d2d;
}

.object-row {
    display: flex;
    align-items: center;
    gap: 2px;
    height: 16px;
    padding-left: 28px;
}

/* project */
.project-body {
    flex: 1;
    display: grid;
    grid-template-columns: 110px 1fr;
    gap: 1px;
    min-height: 0;
    background-color: #232323;
}

.tree {
    margin: 0;
    padding: 0;
    list-style: none;
    background-color: #383838;
    overflow: hidden;
}

.tree li {
    display: flex;
    align-items: center;
    height: 16px;
    white-space: nowrap;
}

.tree .root {
    gap: 4px;
    padding-left: 4px;
    font-weight: 600;
    color: #d2d2d2;
}

.tree .root .icon {
    color: #c4c4c4;
}

.tree .child {
    gap: 3px;
    padding-left: 31px;
}

.tree .picked {
    background-color: #4d4d4d;
}

.tree .root .gold {
    color: #ffc107;
}

.tree .favorites-end {
    margin-bottom: 15px;
}

.browser {
    display: flex;
    flex-direction: column;
    background-color: #333333;
}

.crumbs {
    height: 21px;
    padding: 2px 4px;
    font-weight: 600;
    background-color: #3f3f3f;
    border-bottom: 1px solid #232323;
}

.assets {
    flex: 1;
    padding: 22px 19px;
}

.assets figure {
    display: flex;
    flex-direction: column;
    align-items: center;
    gap: 12px;
    width: 52px;
    margin: 0;
    font-size: 10px;
}

.assets svg {
    align-self: flex-end;
    width: 48px;
    height: 40px;
}

.browser-foot {
    display: flex;
    align-items: center;
    justify-content: flex-end;
    height: 21px;
    padding-right: 16px;
    background-color: #3f3f3f;
    border-top: 1px solid #232323;
}

.browser-foot input[type="range"] {
    width: 55px;
}

/* console */
.console {
    height: 240px;
    flex-shrink: 0;
}

.console .bar > button {
    padding-right: 3px;
}

.clear {
    gap: 5px;
}

.editor {
    gap: 3px;
}

.console .search {
    flex: 0 1 300px;
    margin-left: auto;
    margin-right: 2px;
}

.console .bar > .badge {
    gap: 3px;
    width: 34px;
    padding: 0 1px 0 0;
    background-color: #505050;
    border-right: none;
    border-left: 1px solid #232323;
}

.bar > .badge:last-child {
    margin-right: 1px;
}

.badge .icon {
    width: 14px;
    height: 14px;
}

.badge span {
    color: #c4c4c4;
}

.log {
    flex: 1;
}

.log-detail {
    height: 60px;
    border-top: 1px solid #232323;
}

/* status bar */
.statusbar {
    display: flex;
    justify-content: flex-end;
    height: 23px;
    flex-shrink: 0;
    padding: 2px 2px 0 0;
    color: #c4c4c4;
}

.statusbar button {
    width: 26px;
    border-left: 1px solid #252525;
}

.statusbar .icon {
    width: 15px;
    height: 15px;
}

/* windows taskbar */
.taskbar {
    display: flex;
    height: 40px;
    flex-shrink: 0;
    background: linear-gradient(to right, #22373f, #22373f 40%, #1a2746 80%);
    color: #ffffff;
    font-family: "Noto Sans", "Noto Sans CJK KR", sans-serif;
}

.start {
    width: 48px;
}

.start svg {
    width: 16px;
    height: 16px;
}

.os-search {
    display: flex;
    align-items: center;
    gap: 12px;
    width: 344px;
    padding: 0 11px;
    background-color: #f1f1f1;
    border: 1px solid #bfbfbf;
}

.os-search svg {
    width: 16px;
    height: 16px;
}

.os-search input {
    flex: 1;
    min-width: 0;
    height: 38px;
    padding-bottom: 2px;
    font-family: "Noto Sans CJK KR", sans-serif;
    font-size: 16px;
    font-weight: 300;
    line-height: 24px;
    outline: none;
}

.os-search input::placeholder {
    color: #222222;
}

.task {
    position: relative;
    width: 48px;
    margin-right: 1px;
}

.os-search + .task {
    margin-right: 3px;
}

.task svg {
    width: 24px;
    height: 24px;
}

.task.running::after {
    content: "";
    position: absolute;
    bottom: 0;
    left: 4px;
    right: 4px;
    height: 2px;
    background-color: #76b9ed;
}

.task.current {
    background-color: #4d5f66;
}

.task.current::after {
    left: 0;
    right: 0;
}

.tray {
    display: flex;
    align-items: center;
    gap: 8px;
    margin-left: auto;
    padding-right: 4px;
}

.tray-icon {
    width: 16px;
    height: 16px;
}

.clock {
    display: flex;
    flex-direction: column;
    align-items: center;
    gap: 2px;
    width: 68px;
    margin-left: 1px;
    font-size: 13px;
    white-space: nowrap;
}

.notice {
    width: 18px;
    height: 18px;
    margin: 0 19px 0 9px;
}

.show-desktop {
    width: 1px;
    height: 40px;
    margin-left: -8px;
    background-color: #7b8595;
}
```
